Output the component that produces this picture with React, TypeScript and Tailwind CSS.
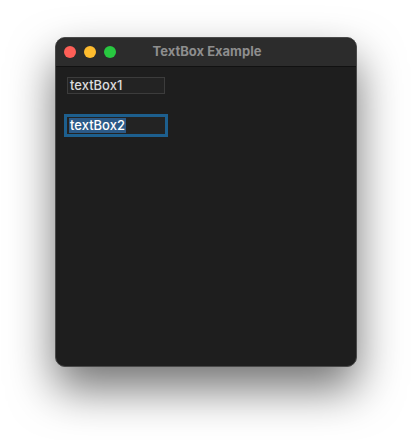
export default function App() {
  return (
    <div className="w-[412px] h-[440px] bg-white pt-[37px] pl-[55px]" style={{ fontFamily: 'Inter, "Liberation Sans", sans-serif' }}>
      <div className="w-[302px] h-[330px] rounded-[10px] border border-[#4a4a4a] bg-[#1e1e1e] overflow-hidden flex flex-col shadow-[0_22px_45px_rgba(0,0,0,0.55)]">
        <div className="h-[29px] shrink-0 bg-[#2c2c2c] border-b border-[#111] flex items-center relative">
          <div className="flex gap-[8px] pl-[8px]">
            <span className="w-[12px] h-[12px] rounded-full bg-[#fe5f57]" />
            <span className="w-[12px] h-[12px] rounded-full bg-[#febc2e]" />
            <span className="w-[12px] h-[12px] rounded-full bg-[#28c840]" />
          </div>
          <div className="absolute inset-0 flex items-center justify-center text-[13px] font-bold text-[#8e8e8e] pl-[2px]">
            TextBox Example
          </div>
        </div>
        <div className="flex flex-col pl-[11px] pt-[10px] gap-[23px]">
          <div className="w-[98px] h-[17px] bg-[#232323] border border-[#3c3c3c] flex items-center px-[2px] text-[13px] font-medium text-[#dcdcdc] leading-none">
            textBox1
          </div>
          <div className="w-[98px] h-[17px] bg-[#232323] outline-[3px] outline-solid outline-[#1d5f8e] flex items-center px-[2px] text-[13px] font-medium text-white leading-none">
            <span className="bg-[#2c5a87] px-[1px] h-[15px] flex items-center">textBox2</span>
          </div>
        </div>
      </div>
    </div>
  );
}
